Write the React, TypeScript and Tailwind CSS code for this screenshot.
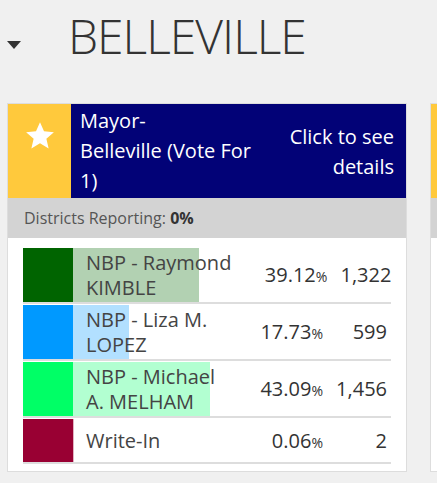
import React from 'react';

const font = { fontFamily: '"Open Sans", "Noto Sans", sans-serif' };

const candidates = [
  { name: ['NBP - Raymond', 'KIMBLE'], pct: 39.12, votes: '1,322', color: 'bg-[#006400]', bar: 'bg-[#b2d1b2]', tall: true },
  { name: ['NBP - Liza M.', 'LOPEZ'], pct: 17.73, votes: '599', color: 'bg-[#0099ff]', bar: 'bg-[#b2e0ff]', tall: true },
  { name: ['NBP - Michael', 'A. MELHAM'], pct: 43.09, votes: '1,456', color: 'bg-[#00ff66]', bar: 'bg-[#b2ffd1]', tall: true },
  { name: ['Write-In'], pct: 0.06, votes: '2', color: 'bg-[#990033]', bar: 'bg-[#e0b2c1]', tall: false },
];

function Star() {
  return (
    <svg width="30" height="29" viewBox="0 0 24 23" className="fill-white">
      <path d="M12 0.8l3.2 7.3 7.9 0.7-6 5.2 1.8 7.8L12 17.7l-6.9 4.1 1.8-7.8-6-5.2 7.9-0.7z" />
    </svg>
  );
}

function ResultRow({ c }: { c: (typeof candidates)[number] }) {
  return (
    <div className="mt-[1px] border-b-2 border-[#dddddd] flex">
      <div className={`w-[50px] shrink-0 ${c.color} ${c.tall ? 'h-[54px]' : 'h-[43px]'}`} />
      <div className="flex-1 relative flex items-center">
        <div className={`absolute left-0 top-0 bottom-0 ${c.bar}`} style={{ width: `${c.pct}%` }} />
        <div className="relative flex-1 pl-[13px] text-[20px] leading-[25px] text-[#444] whitespace-nowrap">
          {c.name[0]}
          {c.name[1] && (
            <>
              <br />
              {c.name[1]}
            </>
          )}
        </div>
        <div className="relative w-[96px] shrink-0 text-right text-[20px] text-[#333] whitespace-nowrap">
          {c.pct.toFixed(2)}
          <span className="text-[14px]">%</span>
        </div>
        <div className="relative w-[68px] shrink-0 text-right text-[20px] text-[#333] pr-[4px]">{c.votes}</div>
      </div>
    </div>
  );
}

function RaceCard() {
  return (
    <div className="w-[400px] shrink-0 border border-[#dddddd] bg-white">
      <div className="flex h-[94px]">
        <div className="w-[63px] bg-[#ffc93c] flex justify-center pt-[17px]">
          <Star />
        </div>
        <div className="flex-1 bg-[#020277] flex text-white text-[20px] leading-[30px]">
          <div className="pl-[9px] pt-[2px] w-[200px]">
            Mayor-
            <br />
            Belleville (Vote For
            <br />
            1)
          </div>
          <div className="flex-1 flex items-center justify-end text-right pr-[12px] pt-[1px]">
            Click to see
            <br />
            details
          </div>
        </div>
      </div>
      <div className="h-[40px] bg-[#d3d3d3] flex items-center pl-[16px] text-[16px] text-[#555]">
        Districts Reporting:&nbsp;<span className="font-bold text-[#333]">0%</span>
      </div>
      <div className="px-[15px] pt-[9px] pb-0">
        {candidates.map((c) => (
          <ResultRow key={c.name[0]} c={c} />
        ))}
      </div>
    </div>
  );
}

// next card in the row, only its left edge shows
function NextCard() {
  return (
    <div className="w-[400px] shrink-0 border border-[#dddddd] bg-white">
      <div className="h-[94px] bg-[#ffc93c]" />
      <div className="h-[40px] bg-[#d3d3d3]" />
      <div className="h-[233px]" />
    </div>
  );
}

export default function App() {
  return (
    <div className="w-[437px] h-[483px] overflow-hidden bg-[#f0f0f0]" style={font}>
      <div className="flex items-center h-[72px] pl-[7px]">
        <svg width="14" height="8" viewBox="0 0 14 8" className="fill-[#333] mt-[17px]">
          <path d="M0 0h14L7 8z" />
        </svg>
        <h1 className="ml-[47px] text-[48px] font-light text-[#333] tracking-[-1px] leading-none">BELLEVILLE</h1>
      </div>
      <div className="flex gap-[23px] pl-[7px] mt-[31px]">
        <RaceCard />
        <NextCard />
      </div>
    </div>
  );
}
